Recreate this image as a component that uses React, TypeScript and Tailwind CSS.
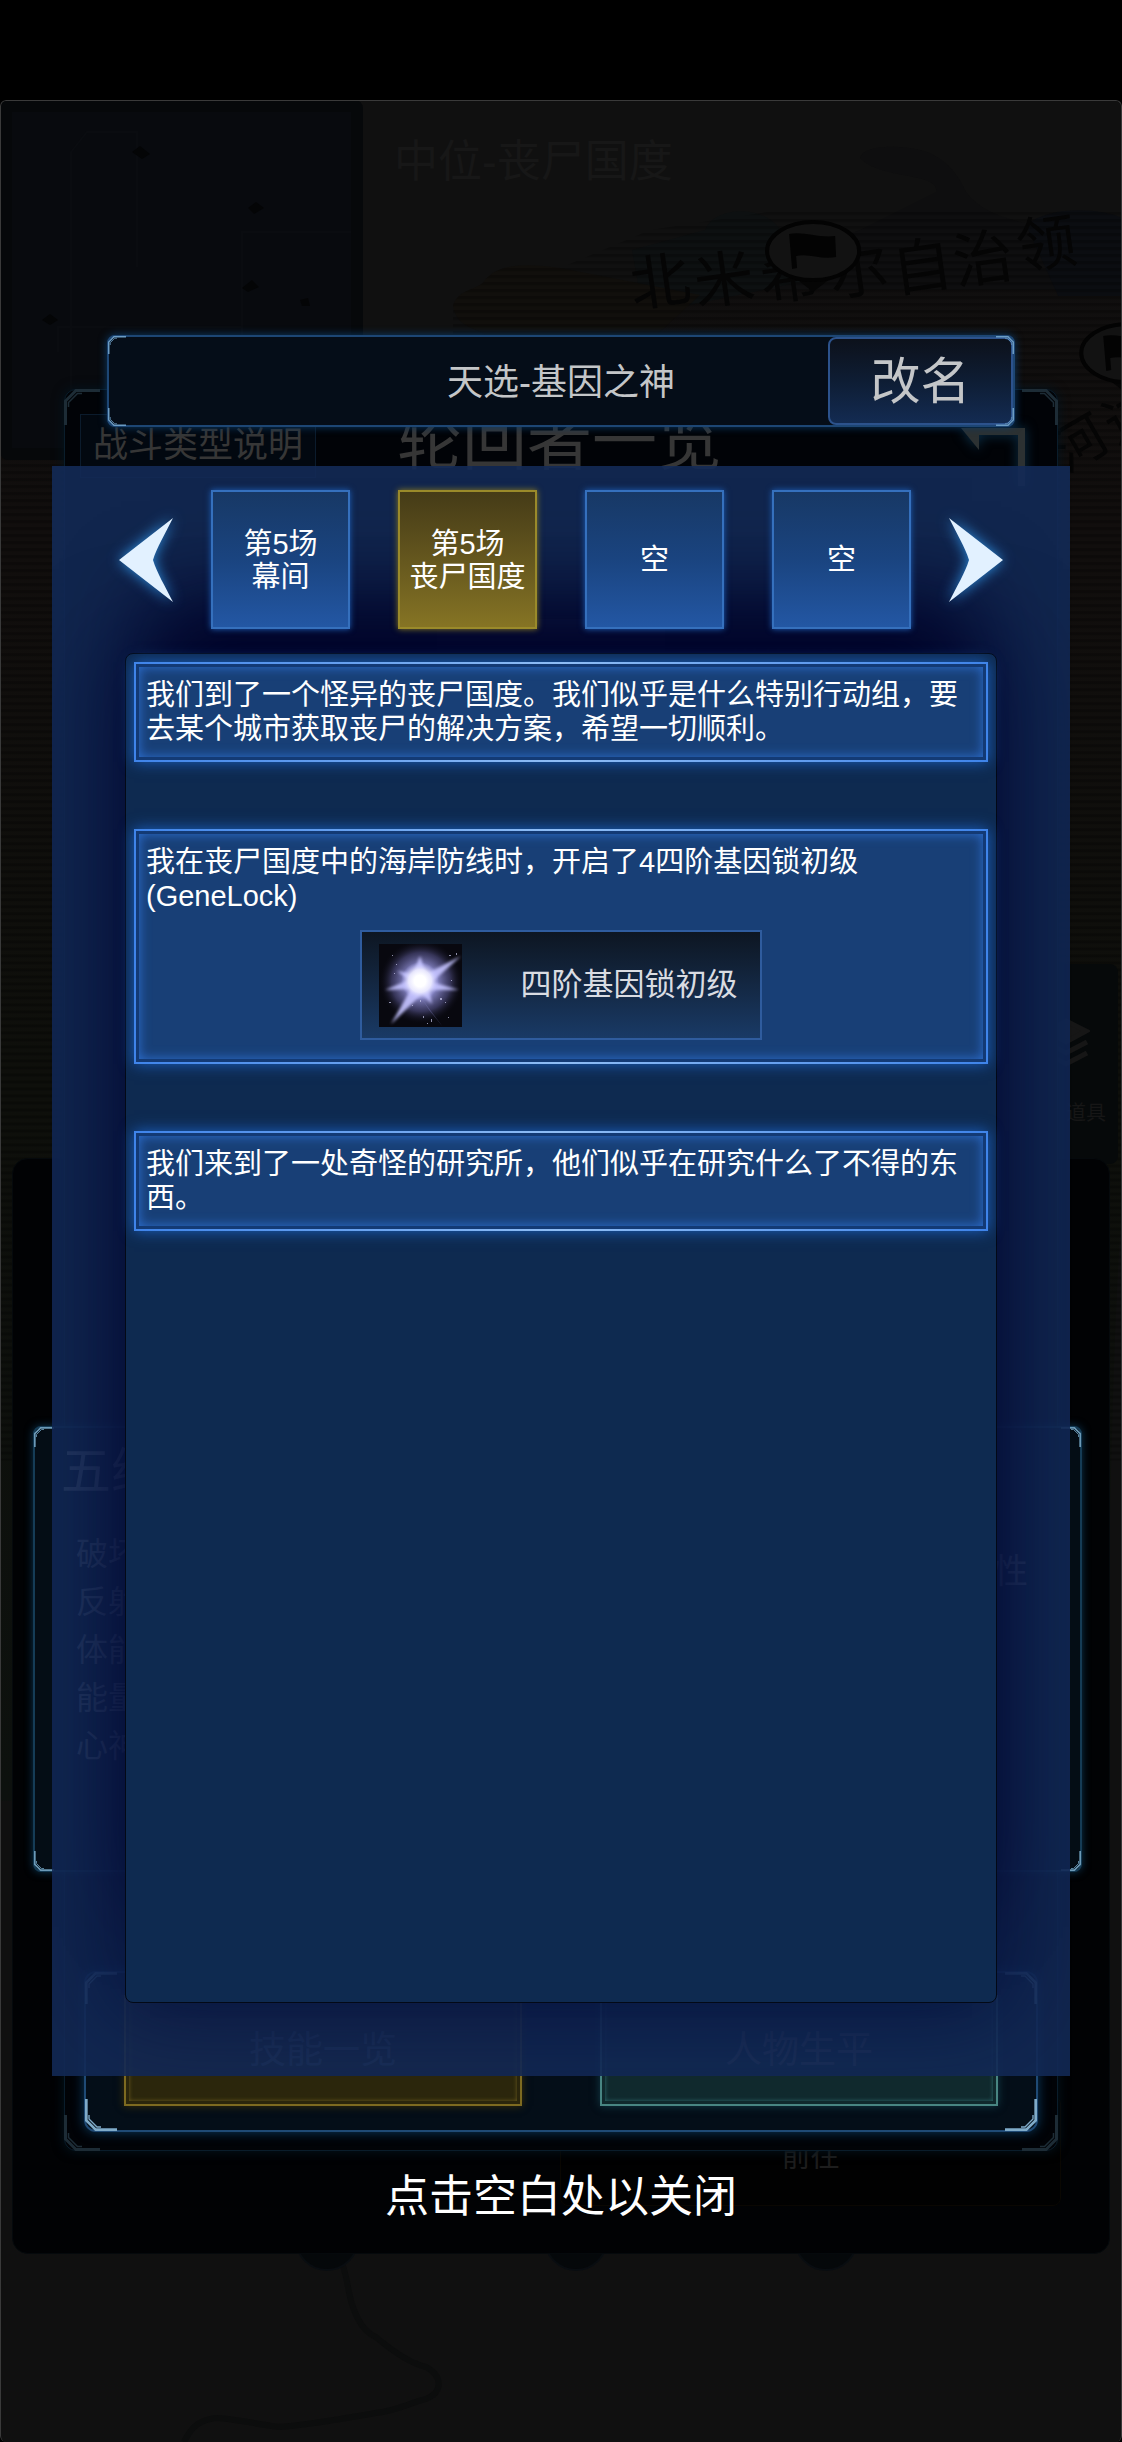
import { useState } from 'react';
import clsx from 'clsx';

const tabs = [
  { id: 1, lines: ['第5场', '幕间'] },
  { id: 2, lines: ['第5场', '丧尸国度'] },
  { id: 3, lines: ['空'] },
  { id: 4, lines: ['空'] },
];

const entries = [
  { id: 1, text: '我们到了一个怪异的丧尸国度。我们似乎是什么特别行动组，要去某个城市获取丧尸的解决方案，希望一切顺利。' },
  { id: 2, text: '我在丧尸国度中的海岸防线时，开启了4四阶基因锁初级(GeneLock)', item: '四阶基因锁初级' },
  { id: 3, text: '我们来到了一处奇怪的研究所，他们似乎在研究什么了不得的东西。' },
];

const stats = ['破坏', '反射', '体能', '能量', '心神'];

const mapLabel = [
  { char: '北', x: 660, y: 182 },
  { char: '米', x: 724, y: 180 },
  { char: '希', x: 790, y: 176 },
  { char: '尔', x: 858, y: 171 },
  { char: '自', x: 922, y: 167 },
  { char: '治', x: 983, y: 159 },
  { char: '领', x: 1046, y: 144 },
];

// Las cuatro esquinas biseladas de un marco
function Corners({ className, size }: { className: string; size: string }) {
  const places = [
    '-left-px -top-px',
    '-right-px -top-px -scale-x-100',
    '-left-px -bottom-px -scale-y-100',
    '-right-px -bottom-px -scale-100',
  ];
  return (
    <>
      {places.map((place) => (
        <svg key={place} viewBox="0 0 24 24" fill="none" className={clsx('absolute', size, place, className)}>
          <path d="M1 24 V8 L8 1 H24" stroke="currentColor" strokeWidth="2" />
          <path d="M3 12 V9 L9 3 H12" stroke="currentColor" strokeWidth="1" />
        </svg>
      ))}
    </>
  );
}

function Pin({ x, y }: { x: number; y: number }) {
  return (
    <g transform={`translate(${x} ${y})`}>
      <path d="M-18 27 L0 41 L18 27 Z" fill="#050505" />
      <ellipse rx="46" ry="29" fill="#121212" stroke="#030303" strokeWidth="4" />
      <path d="M-24 -17 C-10 -20 5 -13 22 -15 L23 6 C8 9 -4 2 -17 5 L-16 17 L-21 18 Z" fill="#030303" />
    </g>
  );
}

function WorldMap() {
  return (
    <svg viewBox="0 0 1122 2341" preserveAspectRatio="xMidYMin slice" className="absolute inset-0 h-full w-full">
      <defs>
        <pattern id="scan" width="8" height="7" patternUnits="userSpaceOnUse">
          <rect width="8" height="3" fill="#000" opacity="0.25" />
        </pattern>
        <linearGradient id="land" x1="0" x2="0" y1="0" y2="1">
          <stop offset="0" stopColor="#100f0f" />
          <stop offset="0.2" stopColor="#110e0d" />
          <stop offset="0.55" stopColor="#0e0f0b" />
          <stop offset="1" stopColor="#0d110e" />
        </linearGradient>
      </defs>
      <path d="M0 240 H470 L560 200 L680 190 L830 150 L1000 140 L1122 120 V1100 C1108 1300 1112 1500 1100 1700 H0 Z" fill="url(#land)" />
      <path d="M860 58 C862 46 895 44 920 50 C945 56 958 75 966 92 C980 112 1010 120 1030 124 L1122 130 V190 H700 L860 130 L936 92 C940 72 880 80 860 58 Z" fill="#0e0e0f" />
      <path d="M632 150 L705 130 C715 105 765 105 780 130 L810 180 L690 205 L640 195 Z" fill="#0d1011" />
      <path d="M1026 125 C1050 105 1100 108 1122 118 V196 H1058 Z" fill="#0b0d11" />
      <path d="M453 206 C458 188 480 190 485 180 C500 162 530 164 560 168 L700 195 L640 250 H500 C490 225 458 235 453 206 Z" fill="#110f0c" />
      <rect y="250" width="1122" height="1110" fill="url(#scan)" />
      <path d="M453 250 V206 C458 188 480 190 485 180 C500 162 530 164 560 168 L650 130 L780 110 L1122 110 V250 Z" fill="url(#scan)" />
      <path d="M343 2165 C348 2180 348 2190 352 2203 C358 2222 366 2232 376 2236 C390 2248 410 2262 426 2266 C444 2276 442 2292 426 2298 C405 2304 395 2310 376 2312 C340 2318 310 2324 279 2326 C250 2322 230 2317 215 2317 C195 2320 190 2330 184 2341" fill="none" stroke="#0c0d0d" strokeWidth="6" />
      <g fontSize="60" fill="#050505" textAnchor="middle">
        {mapLabel.map((label) => (
          <text key={label.char} x={label.x} y={label.y} dy="21" transform={`rotate(-8 ${label.x} ${label.y})`}>
            {label.char}
          </text>
        ))}
        <text x="1080" y="362" fontSize="54" transform="rotate(-30 1080 344)">河</text>
        <text x="1132" y="334" fontSize="54" transform="rotate(-30 1132 316)">边</text>
      </g>
      <Pin x={813} y={151} />
      <Pin x={1127} y={253} />
      <g fill="#05080a" stroke="#090d11" strokeWidth="2">
        <circle cx="327" cy="2138" r="31" />
        <circle cx="576" cy="2138" r="31" />
        <circle cx="826" cy="2138" r="31" />
      </g>
    </svg>
  );
}

function MiniMap() {
  return (
    <div className="absolute left-0 top-0 h-[360px] w-[363px] rounded-lg border-[12px] border-[#06080a] bg-[#080a0e]">
      <svg viewBox="0 0 339 336" preserveAspectRatio="xMidYMin slice" className="h-full w-full">
        <path d="M59 336 V40 L75 20 H125 V155 M230 240 V120 H339 M46 240 V215 H230" fill="none" stroke="#0a0c10" strokeWidth="2" />
        <g fill="#040506">
          <path d="M120 40 L128 34 L138 42 L130 47 Z" />
          <path d="M236 96 L244 90 L252 96 L242 102 Z" />
          <path d="M230 176 L240 168 L247 175 L236 180 Z" />
          <path d="M30 208 L38 202 L46 208 L38 213 Z" />
          <path d="M288 188 L296 186 L298 194 L290 194 Z" />
        </g>
      </svg>
    </div>
  );
}

// Pantallas apagadas que quedan detrás de la ventana
function Background() {
  return (
    <div className="absolute inset-0 overflow-hidden rounded-md bg-[#101010]">
      <WorldMap />
      <MiniMap />
      <p className="absolute left-[394px] top-[32px] text-[44px] leading-[60px] text-[#171717]">中位-丧尸国度</p>

      <div className="absolute right-1 top-[864px] flex h-[200px] w-[100px] flex-col items-end rounded-lg bg-[#06090a] pr-3 pt-[54px] text-[#161616]">
        <svg viewBox="0 0 48 50" className="mr-4 h-[50px] w-12" fill="none" stroke="currentColor" strokeWidth="5">
          <path d="M24 3 L44 13 L24 24 L4 13 Z" fill="currentColor" />
          <path d="M4 24 L24 35 L45 24 M4 35 L24 46 L45 35" />
        </svg>
        <p className="mt-[31px] text-xl">道具</p>
      </div>

      <div className="absolute inset-x-3 top-[1058px] h-[1096px] rounded-2xl border border-[#05090c] bg-[#010204]">
        <div className="absolute bottom-[47px] right-[48px] h-[110px] w-[501px] rounded-lg border border-[#0a0702] bg-[#010101] pt-[43px] text-center text-[29px] leading-[34px] text-[#1d1d1d]">前往</div>
      </div>

      <div className="absolute inset-x-[64px] top-[289px] h-[1762px] rounded-xl border border-[#0a1d2b] bg-[#010307] shadow-[0_0_12px_#04141f]">
        <Corners size="size-9" className="text-[#1d2c36]" />
        <div className="flex items-start pl-[15px] pt-6">
          <div className="h-16 w-[236px] border border-[#0b1b2c] bg-[#020810] pl-3 text-[35px] leading-[60px] text-[#363636]">战斗类型说明</div>
          <p className="ml-[81px] text-[65px] leading-[56px] text-[#363636]">轮回者一览</p>
          <svg viewBox="0 0 64 60" className="ml-auto mr-[32px] mt-[12px] h-[60px] w-16 overflow-visible drop-shadow-[0_0_6px_#0c3450]" fill="#2c3132">
            <path d="M0 2 H64 V60 H57 V9 H18 V24 Z" />
          </svg>
        </div>
        <div className="mt-[87px] flex justify-center gap-[60px] text-[30px] leading-[60px] text-[#505050]">
          <p className="w-[110px] text-center">天选<br />男性</p>
          <div className="mt-[46px] h-[140px] w-[228px] bg-[#5a5478]" />
          <p className="w-[130px] text-center">24<br />媒体浪漫</p>
        </div>
      </div>

      <div className="absolute left-[33px] right-[40px] top-[1326px] h-[446px] rounded-lg border-2 border-[#153c56] bg-[#040d15] shadow-[0_0_8px_#0c3450]">
        <Corners size="size-5" className="text-[#6b9ab8]" />
        <div className="flex justify-between text-[#a8a8a8]">
          <div>
            <p className="ml-[26px] mt-[9px] text-[50px] leading-[70px]">五维</p>
            <ul className="ml-[41px] mt-[23px] text-[32px] leading-[48px]">
              {stats.map((stat) => (
                <li key={stat}>{stat}</li>
              ))}
            </ul>
          </div>
          <p className="mr-[52px] mt-[118px] text-[34px] leading-[50px]">特性</p>
        </div>
      </div>

      <div className="absolute inset-x-[84px] top-[1871px] h-[161px] rounded-xl border-2 border-[#1f4a75] bg-[#040e18] shadow-[0_0_12px_#0b3a60]">
        <Corners size="size-8" className="text-[#7fabc9]" />
        <div className="flex justify-between px-[38px] pt-[22px] text-center text-[37px] text-[#606060]">
          <div className="w-[398px] border-2 border-[#7d6a20] bg-[#2b260c] p-[3px] shadow-[0_0_8px_#3a300a]">
            <div className="leading-[101px] shadow-[inset_0_0_4px_#6b5c1e]">技能一览</div>
          </div>
          <div className="w-[398px] border-2 border-[#488582] bg-[#10292d] p-[3px] shadow-[0_0_8px_#123c48]">
            <div className="leading-[101px] shadow-[inset_0_0_4px_#2d6a6c]">人物生平</div>
          </div>
        </div>
      </div>

      <div className="absolute inset-0 rounded-md border-x border-t border-[#3a3a3a]" />
    </div>
  );
}

function Arrow({ flip, onClick }: { flip?: boolean; onClick: () => void }) {
  return (
    <button onClick={onClick} aria-label={flip ? 'next' : 'previous'} className="relative z-10">
      <svg viewBox="0 0 54 84" className={clsx('h-[84px] w-[54px] overflow-visible drop-shadow-[0_0_7px_#2f8fe0]', flip && '-scale-x-100')}>
        <path d="M0 42 L54 0 C46 16 38 29 34 42 C38 55 46 68 54 84 Z" fill="#e2f1ff" />
      </svg>
    </button>
  );
}

function StarIcon() {
  return (
    <svg viewBox="0 0 83 83" className="size-[83px]">
      <defs>
        <radialGradient id="halo" gradientUnits="userSpaceOnUse" cx="42" cy="38" r="42">
          <stop offset="0" stopColor="#c9c8ff" />
          <stop offset="0.4" stopColor="#8584c4" stopOpacity="0.95" />
          <stop offset="0.7" stopColor="#4a4878" stopOpacity="0.7" />
          <stop offset="1" stopColor="#08080f" stopOpacity="0" />
        </radialGradient>
        <radialGradient id="core" gradientUnits="userSpaceOnUse" cx="41" cy="37" r="19">
          <stop offset="0.3" stopColor="#fff" />
          <stop offset="0.6" stopColor="#f0efff" stopOpacity="0.85" />
          <stop offset="1" stopColor="#b9b8ff" stopOpacity="0" />
        </radialGradient>
        <filter id="soft">
          <feGaussianBlur stdDeviation="1.5" />
        </filter>
      </defs>
      <rect width="83" height="83" fill="#08080f" />
      <circle cx="42" cy="38" r="42" fill="url(#halo)" />
      <g fill="#c4c3ff" filter="url(#soft)" opacity="0.9">
        <path d="M34 30 L41 12 L47 30 L82 12 L53 38 L80 46 L50 46 L53 60 L43 50 L12 80 L32 45 L6 46 L30 36 L18 27 Z" />
      </g>
      <circle cx="41" cy="37" r="19" fill="url(#core)" />
      <path d="M43 55 L64 83 L50 66 Z" fill="#8f8ed0" opacity="0.3" />
      <g fill="#c8c8ec" opacity="0.7">
        <rect x="13" y="11" width="1" height="1" />
        <rect x="17" y="20" width="1" height="1" />
        <rect x="15" y="29" width="1" height="1" />
        <rect x="70" y="11" width="2" height="1" />
        <rect x="77" y="9" width="1" height="2" />
        <rect x="72" y="36" width="1" height="1" />
        <rect x="61" y="54" width="2" height="2" />
        <rect x="66" y="58" width="1" height="1" />
        <rect x="10" y="58" width="2" height="1" />
        <rect x="41" y="56" width="1" height="2" />
        <rect x="33" y="61" width="1" height="1" />
        <rect x="44" y="72" width="1" height="2" />
        <rect x="52" y="75" width="1" height="3" />
        <rect x="48" y="79" width="1" height="1" />
        <rect x="69" y="73" width="1" height="1" />
      </g>
    </svg>
  );
}

function Entry({ text, item }: { text: string; item?: string }) {
  return (
    <li className="border-2 bg-[#133a75] p-[3px] shadow-[0_0_14px_#1b5fbe] [border-image:linear-gradient(90deg,#3f84ea,#8fbdf5_50%,#3f84ea)_1]">
      <div className="bg-[#183f76] px-[7px] py-[11px] shadow-[inset_0_0_12px_#2d6fd2]">
        <p className="text-[29px] leading-[34px] text-white">{text}</p>
        {item && (
          <div className="mx-auto mb-2 mt-[17px] flex h-[110px] w-[402px] items-center border-2 border-[#2f5c9e] bg-linear-to-b from-[#0d1622] to-[#193a66] px-[17px]">
            <StarIcon />
            <p className="flex-1 pl-[53px] text-center text-[31px] text-[#d9dce2]">{item}</p>
          </div>
        )}
      </div>
    </li>
  );
}

export default function App() {
  const [active, setActive] = useState(2);

  const move = (step: number) => {
    setActive((current) => Math.min(tabs.length, Math.max(1, current + step)));
  };

  return (
    <div className="flex min-h-screen flex-col bg-black font-['Liberation_Sans','Noto_Sans_CJK_SC',sans-serif]">
      <div className="h-[100px]" />
      <main className="relative flex-1">
        <Background />

        <div className="relative flex flex-col pt-[235px]">
          {/* Nombre del personaje */}
          <header className="relative mx-[107px] grid h-[92px] grid-cols-[1fr_auto_1fr] items-center rounded-lg border-2 border-[#1d4674] bg-[#050d18] shadow-[0_0_8px_#0c3a66]">
            <Corners size="size-[18px]" className="text-[#6b9cc4]" />
            <h1 className="col-start-2 pt-1 text-[36px] text-[#c4c6c8]">天选-基因之神</h1>
            <button className="h-[88px] w-[185px] justify-self-end rounded-lg border-2 border-[#2c528c] bg-linear-to-b from-[#0c111b] via-[#0e1d34] to-[#132b52] pt-0.5 text-[50px] text-[#c4c6c8]">
              改名
            </button>
          </header>

          <section className="mx-[52px] mt-[39px] overflow-hidden bg-[#132a57]/90 px-[67px] pb-[73px] pt-6">
            <nav className="flex items-center justify-between">
              <Arrow onClick={() => move(-1)} />
              <div className="relative z-10 flex gap-12">
                {tabs.map((tab) => (
                  <button
                    key={tab.id}
                    onClick={() => setActive(tab.id)}
                    className={clsx(
                      'flex size-[139px] flex-col items-center justify-center border-2 pt-0.5 text-[29px] leading-[33px] text-white',
                      active === tab.id
                        ? 'border-[#9a8a2a] bg-linear-to-b from-[#453b17] to-[#867424] shadow-[0_0_6px_#8a7a20]'
                        : 'border-[#3570bd] bg-linear-to-b from-[#173865] via-[#1a4480] to-[#2357a4] shadow-[0_0_6px_#1d5fb8]',
                    )}
                  >
                    {tab.lines.map((line) => (
                      <span key={line}>{line}</span>
                    ))}
                  </button>
                ))}
              </div>
              <Arrow flip onClick={() => move(1)} />
            </nav>

            <ul className="mx-[6px] mt-6 flex min-h-[1350px] flex-col gap-[67px] rounded-lg border border-[#030916] bg-[#0e2a50] p-2 shadow-[0_-80px_80px_-25px_#010328,0_0_90px_8px_#040c3acc]">
              {entries.map((entry) => (
                <Entry key={entry.id} text={entry.text} item={entry.item} />
              ))}
            </ul>
          </section>

          <button className="mt-[89px] text-[44px] leading-[64px] text-white">点击空白处以关闭</button>
        </div>
      </main>
    </div>
  );
}
